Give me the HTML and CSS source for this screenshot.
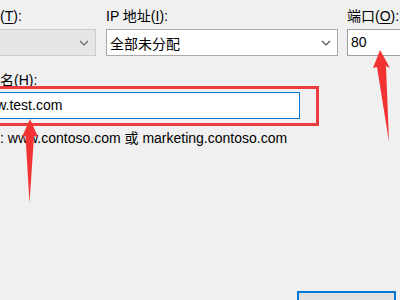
FILE: index.html
```html
<!DOCTYPE html>
<html lang="zh-CN">
<head>
  <meta charset="UTF-8" />
  <title>添加网站绑定</title>
  <link rel="stylesheet" href="styles.css">
</head>
<body>
  <div class="dialog">
    <div class="top-row">
      <div class="field">
        <label>类型(<u>T</u>):</label>
        <div class="combo disabled">
          <span>http</span>
          <svg class="chev" width="10" height="6" viewBox="0 0 10 6"><path d="M1 1 L5 5 L9 1" fill="none" stroke="#666" stroke-width="1.2"/></svg>
        </div>
      </div>
      <div class="field">
        <label>IP 地址(<u>I</u>):</label>
        <div class="combo">
          <span>全部未分配</span>
          <svg class="chev" width="10" height="6" viewBox="0 0 10 6"><path d="M1 1 L5 5 L9 1" fill="none" stroke="#555" stroke-width="1.2"/></svg>
        </div>
      </div>
      <div class="field">
        <label>端口(<u>O</u>):</label>
        <div class="textbox">80</div>
      </div>
    </div>

    <label class="host-label">主机名(<u>H</u>):</label>
    <div class="mark">
      <div class="textbox focused">www.test.com</div>
    </div>
    <div class="example">示例: www.contoso.com 或 marketing.contoso.com</div>

    <div class="footer">
      <div class="btn">确定</div>
    </div>
  </div>

  <svg class="arrows" width="400" height="300" viewBox="0 0 400 300">
    <polygon points="30,119 38,137 34,136 29.5,203 25.5,136 22,137" fill="#f23333"/>
    <polygon points="380,50 390,68 386,66 389,142 377,67 373,68" fill="#f23333"/>
  </svg>
</body>
</html>
```

FILE: styles.css
```css
body {
  margin: 0;
  width: 400px;
  height: 300px;
  overflow: hidden;
  background-color: #f0f0f0;
  color: #000;
  font-family: "Liberation Sans", "Noto Sans CJK SC", sans-serif;
  font-size: 14px;
  position: relative;
}
u {
  text-decoration-thickness: 1px;
  text-underline-offset: 2px;
}
.dialog {
  margin-left: -28px;
  padding-top: 7px;
}
.top-row {
  display: grid;
  grid-template-columns: 124px 232px 80px;
  column-gap: 10px;
}
.top-row .field:last-child {
  margin-left: -1px;
}
.field label {
  display: block;
  height: 18px;
  line-height: 18px;
  margin-bottom: 4px;
}
.combo {
  height: 27px;
  box-sizing: border-box;
  border: 1px solid #a8a8a8;
  background-color: #fff;
  display: flex;
  align-items: center;
  justify-content: space-between;
  padding: 0 6px 0 3px;
}
.combo.disabled {
  background-color: #e6e6e6;
  border-color: #cccccc;
  color: #e6e6e6;
}
.chev {
  flex: none;
}
.textbox {
  height: 27px;
  box-sizing: border-box;
  border: 1px solid #a0a0a0;
  background-color: #fff;
  line-height: 25px;
  padding: 0 3px;
}
.textbox.focused {
  border-color: #0078d7;
  width: 328px;
}
.host-label {
  display: block;
  margin-top: 15px;
  line-height: 18px;
  margin-bottom: -3px;
}
.mark {
  display: inline-block;
  margin-left: -22px;
  border: 3px solid #ec3b3f;
  padding: 3px 16px 4px 19px;
}
.example {
  margin-top: 3px;
  line-height: 18px;
}
.footer {
  display: flex;
  justify-content: flex-end;
  margin-top: 144px;
  padding-right: 4px;
}
.btn {
  width: 99px;
  height: 28px;
  box-sizing: border-box;
  border: 2px solid #0078d7;
  background-color: #e1e1e1;
  text-align: center;
  line-height: 36px;
  color: #333;
}
.arrows {
  position: absolute;
  left: 0;
  top: 0;
}
```
